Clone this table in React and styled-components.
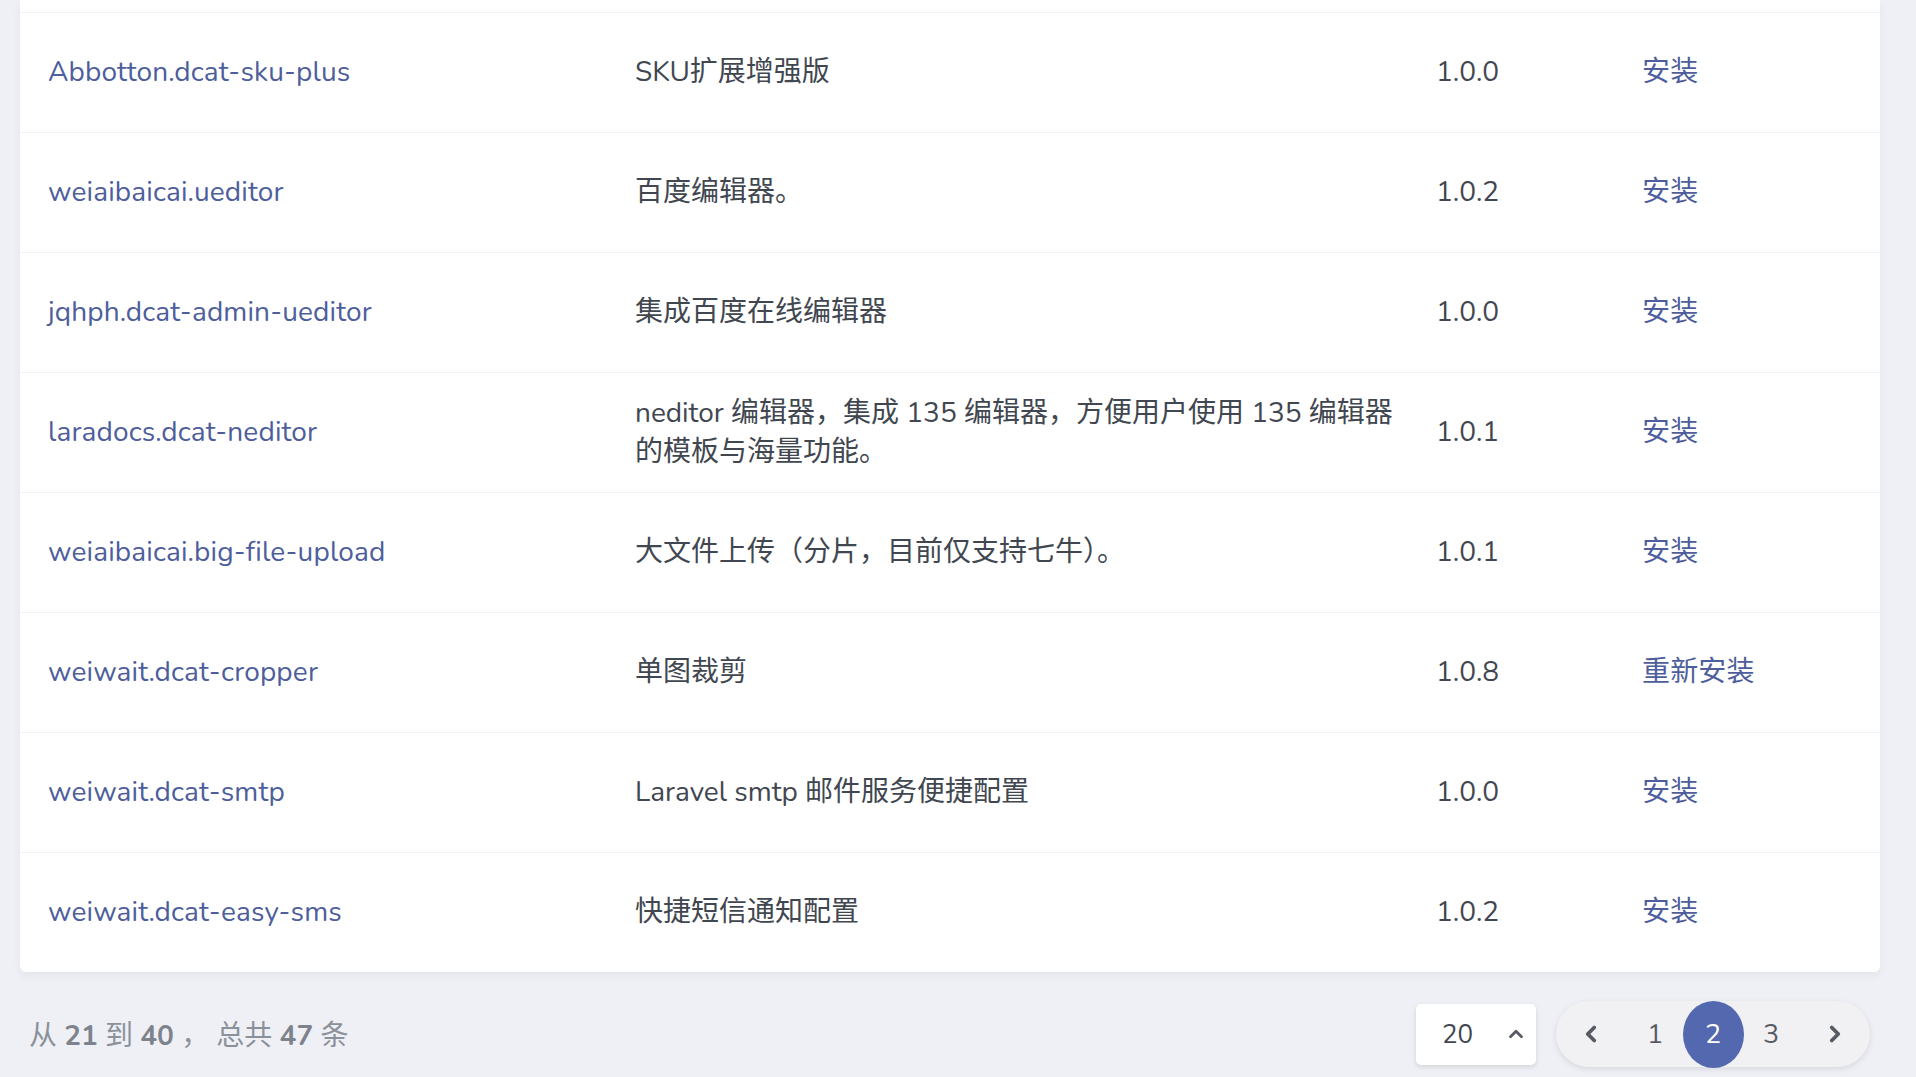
import React, { useState } from "react";
import styled, { createGlobalStyle } from "styled-components";
import { ChevronLeft, ChevronRight, ChevronUp } from "lucide-react";

const GlobalStyle = createGlobalStyle`
  html, body {
    margin: 0;
    padding: 0;
    background: #eff0f5;
  }
  body {
    font-family: "Nunito", "Lato", "Noto Sans CJK SC", sans-serif;
    -webkit-font-smoothing: antialiased;
  }
`;

const extensions = [
  { name: "Abbotton.dcat-sku-plus", desc: "SKU扩展增强版", version: "1.0.0", installed: false },
  { name: "weiaibaicai.ueditor", desc: "百度编辑器。", version: "1.0.2", installed: false },
  { name: "jqhph.dcat-admin-ueditor", desc: "集成百度在线编辑器", version: "1.0.0", installed: false },
  {
    name: "laradocs.dcat-neditor",
    desc: "neditor 编辑器，集成 135 编辑器，方便用户使用 135 编辑器的模板与海量功能。",
    version: "1.0.1",
    installed: false,
  },
  { name: "weiaibaicai.big-file-upload", desc: "大文件上传（分片，目前仅支持七牛）。", version: "1.0.1", installed: false },
  { name: "weiwait.dcat-cropper", desc: "单图裁剪", version: "1.0.8", installed: true },
  { name: "weiwait.dcat-smtp", desc: "Laravel smtp 邮件服务便捷配置", version: "1.0.0", installed: false },
  { name: "weiwait.dcat-easy-sms", desc: "快捷短信通知配置", version: "1.0.2", installed: false },
];

const Page = styled.div`
  min-height: 1077px;
  padding: 0 36px 0 20px;
  box-sizing: border-box;
  display: flex;
  flex-direction: column;
`;

const Card = styled.div`
  background: #fff;
  border-radius: 0 0 6px 6px;
  box-shadow: 0 4px 10px rgba(30, 40, 80, 0.05);
`;

const CutRow = styled.div`
  height: 12px;
  border-bottom: 1px solid #f1f2f4;
`;

const Row = styled.div`
  display: grid;
  grid-template-columns: 591px 801px 206px 1fr;
  height: 119px;
  border-bottom: ${(p) => (p.last ? "none" : "1px solid #f1f2f4")};
  font-size: 28px;
  line-height: 39px;
`;

const Cell = styled.div`
  display: flex;
  align-items: center;
  padding-left: ${(p) => (p.first ? "28px" : "24px")};
  padding-right: 4px;
  color: #414750;
`;

const Link = styled.a`
  color: #4e5e9c;
  text-decoration: none;
  letter-spacing: 0.15px;
  cursor: pointer;
`;

const Footer = styled.div`
  display: flex;
  align-items: center;
  justify-content: space-between;
  padding: 29px 10px 0 9px;
`;

const Summary = styled.div`
  font-size: 28px;
  color: #8b919b;
  b {
    font-weight: 700;
    color: #7d838d;
  }
`;

const Controls = styled.div`
  display: flex;
  align-items: center;
  gap: 20px;
`;

const PerPage = styled.div`
  width: 120px;
  height: 61px;
  box-sizing: border-box;
  background: #fff;
  border-radius: 5px;
  box-shadow: 0 2px 5px rgba(0, 0, 0, 0.12);
  display: flex;
  align-items: center;
  justify-content: space-between;
  padding: 0 9px 0 26px;
  font-size: 26px;
  color: #414750;
`;

const Pager = styled.div`
  height: 66px;
  width: 314px;
  box-sizing: border-box;
  border-radius: 33px;
  background: #f1f1f3;
  box-shadow: 0 2px 6px rgba(0, 0, 0, 0.1);
  display: flex;
  align-items: center;
`;

const PageItem = styled.button`
  border: none;
  background: ${(p) => (p.active ? "#5468b0" : "transparent")};
  color: ${(p) => (p.active ? "#fff" : "#555a63")};
  width: ${(p) => (p.arrow ? "70px" : p.active ? "61px" : "58px")};
  margin: ${(p) => (p.active ? "0 -1.5px" : "0")};
  height: ${(p) => (p.active ? "67px" : "60px")};
  border-radius: 50%;
  display: flex;
  align-items: center;
  justify-content: center;
  font-family: inherit;
  font-size: 27px;
  padding: 0;
  cursor: pointer;
`;

export default function App() {
  const [page, setPage] = useState(2);

  return (
    <>
      <GlobalStyle />
      <Page>
        <Card>
          <CutRow />
          {extensions.map((ext, i) => (
            <Row key={ext.name} last={i === extensions.length - 1}>
              <Cell first>
                <Link>{ext.name}</Link>
              </Cell>
              <Cell>{ext.desc}</Cell>
              <Cell>{ext.version}</Cell>
              <Cell>
                <Link>{ext.installed ? "重新安装" : "安装"}</Link>
              </Cell>
            </Row>
          ))}
        </Card>
        <Footer>
          <Summary>
            从 <b>21</b> 到 <b>40</b> ， 总共 <b>47</b> 条
          </Summary>
          <Controls>
            <PerPage>
              <span>20</span>
              <ChevronUp size={22} strokeWidth={3} color="#555a63" />
            </PerPage>
            <Pager>
              <PageItem arrow onClick={() => setPage(Math.max(1, page - 1))}>
                <ChevronLeft size={26} strokeWidth={3.5} />
              </PageItem>
              {[1, 2, 3].map((n) => (
                <PageItem key={n} active={page === n} onClick={() => setPage(n)}>
                  {n}
                </PageItem>
              ))}
              <PageItem arrow onClick={() => setPage(Math.min(3, page + 1))}>
                <ChevronRight size={26} strokeWidth={3.5} />
              </PageItem>
            </Pager>
          </Controls>
        </Footer>
      </Page>
    </>
  );
}
